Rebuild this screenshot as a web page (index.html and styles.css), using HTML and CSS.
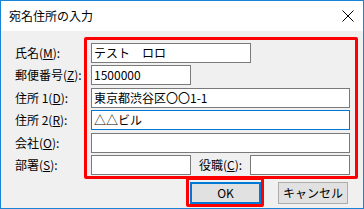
FILE: index.html
```html
<!DOCTYPE html>
<html lang="ja">
<head>
<meta charset="utf-8">
<link rel="stylesheet" href="styles.css">
</head>
<body>
<div class="window">
  <div class="titlebar">
    <span class="title">宛名住所の入力</span>
    <svg class="close" width="12" height="12" viewBox="0 0 12 12"><path d="M0.5 0.5 L11.5 11.5 M11.5 0.5 L0.5 11.5" stroke="#000" stroke-width="1" fill="none"/></svg>
  </div>
  <div class="body">
    <div class="form">
      <label class="lbl">氏名(<u>M</u>):</label>
      <div class="cell"><div class="field w160">テスト　ロロ</div></div>
      <label class="lbl">郵便番号(<u>Z</u>):</label>
      <div class="cell"><div class="field w100">1500000</div></div>
      <label class="lbl">住所 1(<u>D</u>):</label>
      <div class="cell"><div class="field wfull">東京都渋谷区〇〇1-1</div></div>
      <label class="lbl">住所 2(<u>R</u>):</label>
      <div class="cell"><div class="field wfull focus">△△ビル</div></div>
      <label class="lbl">会社(<u>O</u>):</label>
      <div class="cell"><div class="field wfull"></div></div>
      <label class="lbl">部署(<u>S</u>):</label>
      <div class="cell split">
        <div class="field w100"></div>
        <label class="lbl inner">役職(<u>C</u>):</label>
        <div class="field w100 push"></div>
      </div>
    </div>
    <div class="buttons">
      <button class="btn default">OK</button>
      <button class="btn">キャンセル</button>
    </div>
    <div class="mark"></div>
  </div>
</div>
</body>
</html>
```
FILE: styles.css
```css
* { box-sizing: border-box; }
html, body { margin: 0; padding: 0; }
body {
  width: 364px;
  height: 209px;
  overflow: hidden;
  font-family: "Noto Sans CJK JP", "Noto Sans", sans-serif;
  font-size: 12px;
  color: #000;
}
.window {
  width: 364px;
  height: 209px;
  border: 1px solid #1883d7;
  display: flex;
  flex-direction: column;
  background: #fff;
}
.titlebar {
  height: 30px;
  flex: none;
  display: flex;
  align-items: center;
  padding: 0 9px 0 8px;
  background: #fff;
}
.title {
  flex: 1;
  font-size: 12px;
  line-height: 14px;
  margin-top: -1px;
}
.close { margin-top: -1px; margin-right: 0; }
.body {
  flex: 1;
  background: #f0f0f0;
  position: relative;
  padding: 12px 14px 0 14px;
}
.form {
  display: grid;
  grid-template-columns: 76px 259px;
  grid-auto-rows: 20px;
  row-gap: 2.4px;
}
.lbl {
  display: flex;
  align-items: center;
  line-height: 14px;
  white-space: nowrap;
}
.lbl u { text-underline-offset: 1px; }
.cell { display: flex; align-items: stretch; }
.field {
  height: 20px;
  border: 1px solid #7a7a7a;
  background: #fff;
  padding: 0 2px;
  line-height: 17px;
  white-space: nowrap;
}
.field.focus { border-color: #0078d7; }
.w160 { width: 160px; }
.w100 { width: 100px; }
.wfull { width: 259px; }
.split { align-items: center; }
.lbl.inner { margin-left: 8px; height: 20px; }
.push { margin-left: auto; }
.buttons {
  display: flex;
  justify-content: flex-end;
  gap: 17px;
  margin-top: 7px;
  padding-right: 1px;
}
.btn {
  width: 70px;
  height: 22px;
  border: 1px solid #adadad;
  background: #e1e1e1;
  font-family: inherit;
  font-size: 12px;
  line-height: 14px;
  color: #000;
  padding: 0;
  margin: 0;
}
.btn.default {
  width: 71px;
  border: 2px solid #0078d7;
  position: relative;
}
.btn.default::after {
  content: "";
  position: absolute;
  left: -6px;
  top: -7px;
  right: -5px;
  bottom: -5px;
  border: 3px solid #ff0000;
  border-radius: 2px;
}
.mark {
  position: absolute;
  left: 83px;
  top: 6px;
  width: 274px;
  height: 142px;
  border: 3px solid #ff0000;
  border-radius: 2px;
}
```
